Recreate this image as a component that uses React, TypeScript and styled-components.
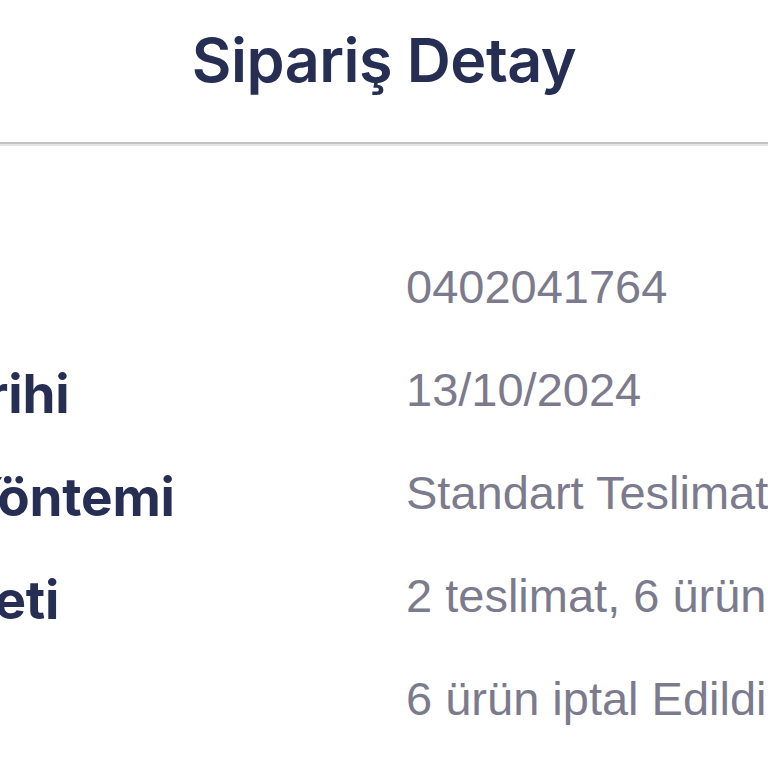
import React from "react";
import styled, { createGlobalStyle } from "styled-components";

const Global = createGlobalStyle`
  html, body { margin: 0; padding: 0; background: #ffffff; }
  body { overflow: hidden; }
`;

const Page = styled.div`
  width: 768px;
  height: 768px;
  overflow: hidden;
  background: #ffffff;
  display: flex;
  flex-direction: column;
`;

const Header = styled.header`
  height: 144px;
  box-sizing: border-box;
  display: flex;
  justify-content: center;
  align-items: flex-start;
  padding-top: 21px;
  border-bottom: 2px solid #c2c2c4;
  box-shadow: 0 2px 0 #e4e4e6;
`;

const Title = styled.h1`
  margin: 0;
  font-family: Inter, "Noto Sans", sans-serif;
  font-weight: 600;
  font-size: 61px;
  line-height: 78px;
  letter-spacing: -0.5px;
  color: #262e54;
`;

const Details = styled.section`
  margin-left: -266px;
  padding-top: 91px;
  display: flex;
  flex-direction: column;
`;

const Row = styled.div`
  display: grid;
  grid-template-columns: 672px 1fr;
  align-items: start;
  height: 103px;
  white-space: nowrap;
`;

const Label = styled.span`
  padding-top: 5px;
  font-family: Inter, "Noto Sans", sans-serif;
  font-weight: 700;
  font-size: 53px;
  line-height: 103px;
  letter-spacing: -0.2px;
  color: #262e54;
`;

const Value = styled.span`
  font-family: "Liberation Sans", Arial, sans-serif;
  font-weight: 400;
  font-size: 47px;
  line-height: 103px;
  color: #7b7b8d;
`;

const rows = [
  { label: "Sipariş No", value: "0402041764" },
  { label: "Sipariş Tarihi", value: "13/10/2024" },
  { label: "Teslimat Yöntemi", value: "Standart Teslimat" },
  { label: "Sipariş Özeti", value: "2 teslimat, 6 ürün" },
  { label: "Durum", value: "6 ürün iptal Edildi" },
];

export default function App() {
  return (
    <Page>
      <Global />
      <Header>
        <Title>Sipariş Detay</Title>
      </Header>
      <Details>
        {rows.map((r) => (
          <Row key={r.label}>
            <Label>{r.label}</Label>
            <Value>{r.value}</Value>
          </Row>
        ))}
      </Details>
    </Page>
  );
}
